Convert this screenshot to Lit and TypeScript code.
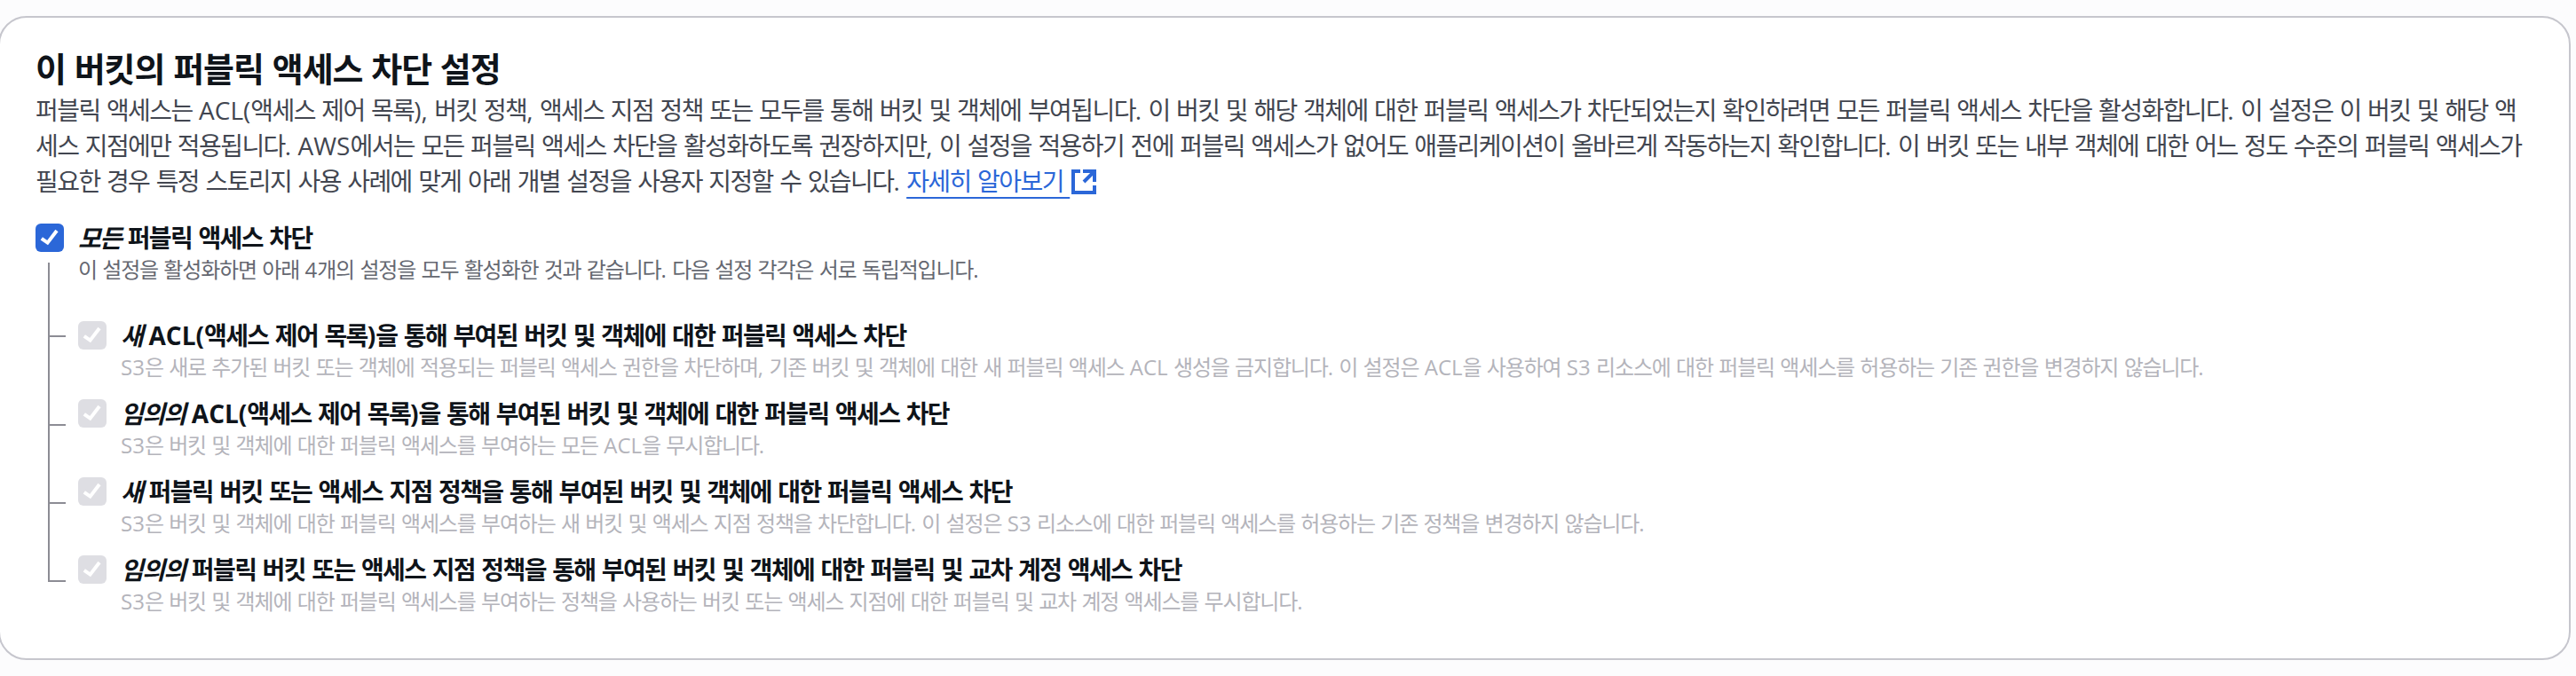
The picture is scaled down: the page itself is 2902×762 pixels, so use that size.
import { css, html, LitElement, nothing, svg } from "lit";
import { customElement, property } from "lit/decorators.js";

interface Setting {
	lead: string;
	label: string;
	description: string;
}

const SETTINGS: Setting[] = [
	{
		lead: "새",
		label: " ACL(액세스 제어 목록)을 통해 부여된 버킷 및 객체에 대한 퍼블릭 액세스 차단",
		description:
			"S3은 새로 추가된 버킷 또는 객체에 적용되는 퍼블릭 액세스 권한을 차단하며, 기존 버킷 및 객체에 대한 새 퍼블릭 액세스 ACL 생성을 금지합니다. 이 설정은 ACL을 사용하여 S3 리소스에 대한 퍼블릭 액세스를 허용하는 기존 권한을 변경하지 않습니다.",
	},
	{
		lead: "임의의",
		label: " ACL(액세스 제어 목록)을 통해 부여된 버킷 및 객체에 대한 퍼블릭 액세스 차단",
		description:
			"S3은 버킷 및 객체에 대한 퍼블릭 액세스를 부여하는 모든 ACL을 무시합니다.",
	},
	{
		lead: "새",
		label: " 퍼블릭 버킷 또는 액세스 지점 정책을 통해 부여된 버킷 및 객체에 대한 퍼블릭 액세스 차단",
		description:
			"S3은 버킷 및 객체에 대한 퍼블릭 액세스를 부여하는 새 버킷 및 액세스 지점 정책을 차단합니다. 이 설정은 S3 리소스에 대한 퍼블릭 액세스를 허용하는 기존 정책을 변경하지 않습니다.",
	},
	{
		lead: "임의의",
		label: " 퍼블릭 버킷 또는 액세스 지점 정책을 통해 부여된 버킷 및 객체에 대한 퍼블릭 및 교차 계정 액세스 차단",
		description:
			"S3은 버킷 및 객체에 대한 퍼블릭 액세스를 부여하는 정책을 사용하는 버킷 또는 액세스 지점에 대한 퍼블릭 및 교차 계정 액세스를 무시합니다.",
	},
];

const INTRO = [
	"퍼블릭 액세스는 ACL(액세스 제어 목록), 버킷 정책, 액세스 지점 정책 또는 모두를 통해 버킷 및 객체에 부여됩니다. 이 버킷 및 해당 객체에 대한 퍼블릭 액세스가 차단되었는지 확인하려면 모든 퍼블릭 액세스 차단을 활성화합니다. 이 설정은 이 버킷 및 해당 액",
	"세스 지점에만 적용됩니다. AWS에서는 모든 퍼블릭 액세스 차단을 활성화하도록 권장하지만, 이 설정을 적용하기 전에 퍼블릭 액세스가 없어도 애플리케이션이 올바르게 작동하는지 확인합니다. 이 버킷 또는 내부 객체에 대한 어느 정도 수준의 퍼블릭 액세스가",
	"필요한 경우 특정 스토리지 사용 사례에 맞게 아래 개별 설정을 사용자 지정할 수 있습니다. ",
];

// Hangul is tracked tighter than the Latin letters and punctuation next to it.
function mixed(text: string) {
	return text
		.split(/([\x21-\x7e]+)/)
		.map((part, i) => (i % 2 ? html`<span class="latin">${part}</span>` : part));
}

@customElement("check-option")
export class CheckOption extends LitElement {
	static styles = css`
    :host {
      display: grid;
      grid-template-columns: 32px 1fr;
      column-gap: 16px;
      align-items: start;
      white-space: nowrap;
    }
    .box {
      display: block;
      width: 32px;
      height: 32px;
      margin-top: 4px;
      border-radius: 6px;
      background: #2b67d8;
    }
    :host([disabled]) .box {
      background: #dedee3;
    }
    .box path {
      fill: none;
      stroke: #fff;
      stroke-width: 4;
    }
    .label {
      color: #0f141a;
      font-size: 28px;
      line-height: 40px;
      font-weight: 700;
      letter-spacing: -1.6px;
      word-spacing: 1.65px;
    }
    .description {
      color: #656871;
      font-size: 24px;
      line-height: 32px;
      letter-spacing: -1.17px;
      word-spacing: 1.3px;
    }
    :host([disabled]) .description {
      color: #b4b4bb;
    }
    .latin {
      letter-spacing: 0;
    }
  `;

	@property() lead = "";
	@property() label = "";
	@property() description = "";
	@property({ type: Boolean, reflect: true }) disabled = false;

	render() {
		return html`
      <svg class="box" viewBox="0 0 32 32">
        ${svg`<path d="M6.8 16.8 13.6 21.6 24 8"/>`}
      </svg>
      <div>
        <div class="label"><em>${this.lead}</em>${mixed(this.label)}</div>
        ${this.description ? html`<div class="description">${mixed(this.description)}</div>` : nothing}
      </div>
    `;
	}
}

@customElement("app-root")
export class AppRoot extends LitElement {
	static styles = css`
    :host {
      display: block;
      box-sizing: border-box;
      height: 762px;
      padding: 18px 6px 0 0;
      overflow: hidden;
      background: #fcfcfd;
      font-family: "Open Sans", "Noto Sans CJK KR", sans-serif;
    }
    .card {
      box-sizing: border-box;
      height: 726px;
      margin-left: -2px;
      padding: 35px 40px;
      border: 2px solid #c6c6cd;
      border-radius: 32px;
      background: #fff;
    }
    h2 {
      margin: 0;
      color: #0f141a;
      font-size: 38px;
      line-height: 44px;
      font-weight: 700;
      letter-spacing: -1.06px;
      word-spacing: 1px;
      white-space: nowrap;
    }
    .intro {
      margin: 5px 0 24px;
      color: #424650;
      font-size: 28px;
      line-height: 40px;
      letter-spacing: -1.57px;
      word-spacing: 1.65px;
      white-space: nowrap;
    }
    .latin {
      letter-spacing: 0;
    }
    a {
      color: #2b67d8;
      text-decoration: underline 2px;
      text-underline-offset: 7px;
      text-decoration-skip-ink: none;
    }
    .external {
      width: 28px;
      height: 28px;
      margin-left: 2px;
      vertical-align: -4px;
      fill: none;
      stroke: #2b67d8;
      stroke-width: 4;
    }
    .tree {
      display: grid;
      grid-template-columns: 48px 1fr;
    }
    .lines {
      width: 20px;
      height: 360px;
      margin: -24px 0 0 14px;
      fill: none;
      stroke: #8c8c94;
      stroke-width: 2;
    }
    .options {
      display: grid;
      gap: 16px;
      padding-top: 38px;
    }
  `;

	render() {
		return html`
      <section class="card">
        <h2>이 버킷의 퍼블릭 액세스 차단 설정</h2>
        <p class="intro">
          ${mixed(INTRO[0])}<br />${mixed(INTRO[1])}<br />${mixed(INTRO[2])}<a>자세히 알아보기&nbsp;</a><svg class="external" viewBox="0 0 28 28">
            <path d="M10 2H2v24h24v-8M13 2h13v12M26 2 14 14" />
          </svg>
        </p>
        <check-option
          lead="모든"
          label=" 퍼블릭 액세스 차단"
          description="이 설정을 활성화하면 아래 4개의 설정을 모두 활성화한 것과 같습니다. 다음 설정 각각은 서로 독립적입니다."
        ></check-option>
        <div class="tree">
          <svg class="lines" viewBox="0 0 20 360">
            <path d="M1 0V360M0 83H20M0 183H20M0 271H20M0 359H20" />
          </svg>
          <div class="options">
            ${SETTINGS.map(
							(s) => html`
                <check-option
                  disabled
                  .lead=${s.lead}
                  .label=${s.label}
                  .description=${s.description}
                ></check-option>
              `,
						)}
          </div>
        </div>
      </section>
    `;
	}
}
